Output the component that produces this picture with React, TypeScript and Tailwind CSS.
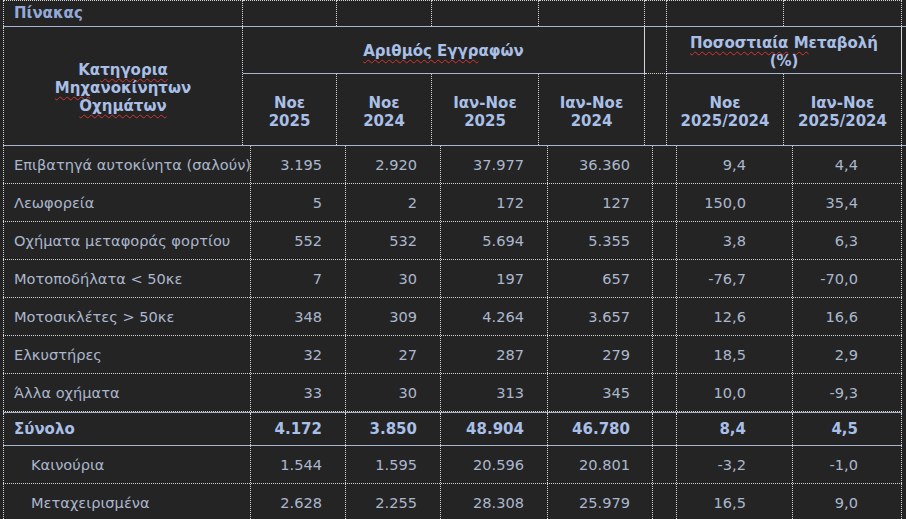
import React from "react";

interface RowType {
	label: string;
	values: string[];
	kind?: "total" | "sub";
}

const rows: RowType[] = [
	{ label: "Επιβατηγά αυτοκίνητα (σαλούν)", values: ["3.195", "2.920", "37.977", "36.360", "9,4", "4,4"] },
	{ label: "Λεωφορεία", values: ["5", "2", "172", "127", "150,0", "35,4"] },
	{ label: "Οχήματα μεταφοράς φορτίου", values: ["552", "532", "5.694", "5.355", "3,8", "6,3"] },
	{ label: "Μοτοποδήλατα < 50κε", values: ["7", "30", "197", "657", "-76,7", "-70,0"] },
	{ label: "Μοτοσικλέτες > 50κε", values: ["348", "309", "4.264", "3.657", "12,6", "16,6"] },
	{ label: "Ελκυστήρες", values: ["32", "27", "287", "279", "18,5", "2,9"] },
	{ label: "Άλλα οχήματα", values: ["33", "30", "313", "345", "10,0", "-9,3"] },
	{ label: "Σύνολο", values: ["4.172", "3.850", "48.904", "46.780", "8,4", "4,5"], kind: "total" },
	{ label: "Καινούρια", values: ["1.544", "1.595", "20.596", "20.801", "-3,2", "-1,0"], kind: "sub" },
	{ label: "Μεταχειρισμένα", values: ["2.628", "2.255", "28.308", "25.979", "16,5", "9,0"], kind: "sub" },
];

const titleCols = ["w-[94px]", "w-[95px]", "w-[107px]", "w-[106px]", "w-[22px]", "w-[117px]", "w-[118px]"];

// header + body columns don't line up in the original, keep it that way
const dot = "border-dotted border-[#d6d6d6]";
const sq = "underline decoration-wavy decoration-[#d23434] decoration-1 underline-offset-[3px]";

const Squiggle: React.FC<{ children: React.ReactNode }> = ({ children }) => (
	<span className={sq}>{children}</span>
);

const SubHead: React.FC<{ top: string; bottom: string; w: string }> = ({ top, bottom, w }) => (
	<div className={`${w} shrink-0 flex flex-col items-center justify-center pt-[4px] border-r ${dot}`}>
		<span>{top}</span>
		<span>{bottom}</span>
	</div>
);

const App: React.FC = () => {
	return (
		<div
			className="h-[519px] w-[906px] overflow-hidden bg-[#242424] text-[#abb7cc] pl-[3px]"
			style={{ fontFamily: '"DejaVu Sans", Verdana, sans-serif' }}>
			{/* TITLE ROW */}
			<div className="h-[27px] w-[903px] flex border-b border-solid border-b-[#a7b5cf]">
				<div className={`w-[240px] shrink-0 flex items-center pl-[10px] border-l border-t border-r ${dot} text-[15px] font-bold text-[#93aad8]`}>
					Πίνακας
				</div>
				{titleCols.map((w, i) => (
					<div key={i} className={`${w} shrink-0 border-t border-r ${dot}`}></div>
				))}
			</div>

			{/* HEADER */}
			<div className="h-[119px] w-[903px] flex border-b border-solid border-b-[#a7b5cf] font-bold text-[15px] leading-[18px] text-[#a9bfe6]">
				<div className={`w-[240px] shrink-0 flex flex-col items-center justify-center pt-[4px] border-l border-r ${dot}`}>
					<span>
						Κα<Squiggle>τηγορια</Squiggle>
					</span>
					<span>
						<Squiggle>Μηχ</Squiggle>ανοκίνητων
					</span>
					<span>
						<Squiggle>Οχημάτων</Squiggle>
					</span>
				</div>
				<div className="w-[402px] shrink-0 flex flex-col">
					<div className={`h-[47px] flex items-center justify-center pt-[2px] border-b border-solid border-b-[#a7b5cf] border-r ${dot}`}>
						<span>
							<Squiggle>Αριθμός Εγγρ</Squiggle>αφών
						</span>
					</div>
					<div className="flex-1 flex">
						<SubHead w="w-[94px]" top="Νοε" bottom="2025" />
						<SubHead w="w-[95px]" top="Νοε" bottom="2024" />
						<SubHead w="w-[107px]" top="Ιαν-Νοε" bottom="2025" />
						<SubHead w="w-[106px]" top="Ιαν-Νοε" bottom="2024" />
					</div>
				</div>
				<div className="w-[22px] shrink-0 flex flex-col">
					<div className={`h-[47px] border-b border-r ${dot}`}></div>
					<div className={`flex-1 border-r ${dot}`}></div>
				</div>
				<div className="w-[235px] shrink-0 flex flex-col">
					<div className={`h-[47px] flex flex-col items-center justify-center pt-[4px] border-b border-solid border-b-[#a7b5cf] border-r ${dot}`}>
						<span>
							<Squiggle>Ποσοστιαία</Squiggle> <Squiggle>Μ</Squiggle>εταβολή
						</span>
						<span>(%)</span>
					</div>
					<div className="flex-1 flex">
						<SubHead w="w-[117px]" top="Νοε" bottom="2025/2024" />
						<SubHead w="w-[118px]" top="Ιαν-Νοε" bottom="2025/2024" />
					</div>
				</div>
			</div>

			{/* BODY */}
			<div className="w-[899px] flex flex-col text-[14.6px]">
				{rows.map((row) => {
					const total = row.kind === "total";
					return (
						<div
							key={row.label}
							className={`flex ${
								total
									? "h-[34px] border-t border-b border-solid border-[#a7b5cf] font-bold text-[15px] text-[#a9bfe6]"
									: `h-[38px] border-b ${dot}`
							}`}>
							<div
								className={`w-[248px] shrink-0 flex items-center whitespace-nowrap border-l border-r ${dot} ${
									row.kind === "sub" ? "pl-[27px]" : "pl-[10px]"
								}`}>
								{row.label}
							</div>
							<div className={`w-[95px] shrink-0 flex items-center justify-end pr-[23px] border-r ${dot}`}>{row.values[0]}</div>
							<div className={`w-[95px] shrink-0 flex items-center justify-end pr-[23px] border-r ${dot}`}>{row.values[1]}</div>
							<div className={`w-[107px] shrink-0 flex items-center justify-end pr-[23px] border-r ${dot}`}>{row.values[2]}</div>
							<div className={`w-[105px] shrink-0 flex items-center justify-end pr-[22px] border-r ${dot}`}>{row.values[3]}</div>
							<div className={`w-[24px] shrink-0 border-r ${dot}`}></div>
							<div className={`w-[116px] shrink-0 flex items-center justify-end pr-[46px] border-r ${dot}`}>{row.values[4]}</div>
							<div className={`w-[109px] shrink-0 flex items-center justify-end pr-[43px] border-r ${dot}`}>{row.values[5]}</div>
						</div>
					);
				})}
			</div>
		</div>
	);
};

export default App;
